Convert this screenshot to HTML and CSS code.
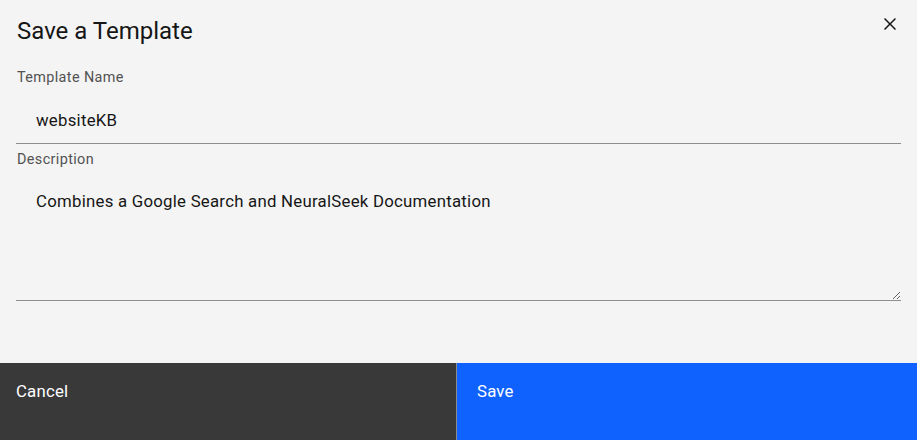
FILE: index.html
```html
<!DOCTYPE html>
<html lang="en">
<head>
<meta charset="utf-8">
<title>Save a Template</title>
<link rel="stylesheet" href="styles.css">
</head>
<body>
<div class="modal">
  <header class="modal-header">
    <h2 class="modal-title">Save a Template</h2>
    <button class="modal-close" aria-label="Close">
      <svg width="24" height="24" viewBox="0 0 32 32" fill="currentColor"><path d="M24 9.4L22.6 8 16 14.6 9.4 8 8 9.4 14.6 16 8 22.6 9.4 24 16 17.4 22.6 24 24 22.6 17.4 16 24 9.4z"/></svg>
    </button>
  </header>
  <div class="modal-body">
    <div class="field field-name">
      <label class="field-label" for="tname">Template Name</label>
      <input class="text-input" id="tname" type="text" value="websiteKB">
    </div>
    <div class="field field-desc">
      <label class="field-label" for="tdesc">Description</label>
      <textarea class="text-area" id="tdesc">Combines a Google Search and NeuralSeek Documentation</textarea>
    </div>
  </div>
  <footer class="modal-footer">
    <button class="btn btn-secondary">Cancel</button>
    <button class="btn btn-primary">Save</button>
  </footer>
</div>
</body>
</html>
```
FILE: styles.css
```css
html, body {
  margin: 0;
  padding: 0;
  background: #f4f4f4;
}
body {
  font-family: Roboto, "Liberation Sans", sans-serif;
  color: #161616;
}
.modal {
  position: relative;
  width: 917px;
  height: 440px;
  display: flex;
  flex-direction: column;
  background: #f4f4f4;
}
.modal-header {
  padding: 16px 16px 0 17px;
}
.modal-title {
  margin: 0;
  font-size: 24px;
  line-height: 30px;
  font-weight: 400;
  color: #161616;
}
.modal-close {
  position: absolute;
  top: 12px;
  right: 15px;
  width: 24px;
  height: 24px;
  padding: 0;
  border: 0;
  background: transparent;
  color: #161616;
  display: flex;
}
.modal-body {
  flex: 1;
  padding: 22px 16px 0 16px;
  display: flex;
  flex-direction: column;
}
.field {
  display: flex;
  flex-direction: column;
}
.field-desc {
  margin-top: 6px;
}
.field-label {
  font-size: 14.4px;
  line-height: 19px;
  letter-spacing: 0.38px;
  color: #525252;
  padding-left: 1px;
  margin-bottom: 9px;
}
.field-desc .field-label {
  margin-bottom: 8px;
}
.text-input,
.text-area {
  box-sizing: border-box;
  width: 100%;
  font-family: inherit;
  font-size: 16.8px;
  letter-spacing: 0.25px;
  color: #161616;
  background: #f4f4f4;
  border: 0;
  border-bottom: 1px solid #8d8d8d;
  outline: none;
  margin: 0;
  padding: 0 20px;
}
.text-input {
  height: 48px;
}
.text-area {
  height: 124px;
  line-height: 21.6px;
  padding: 14px 20px 12px 20px;
  resize: vertical;
}
.modal-footer {
  display: flex;
  height: 77px;
}
.btn {
  border: 0;
  margin: 0;
  font-family: inherit;
  font-size: 16.8px;
  line-height: 21.6px;
  letter-spacing: 0.2px;
  color: #ffffff;
  text-align: left;
  display: flex;
  align-items: flex-start;
  padding: 18px 16px 0 16px;
}
.btn-secondary {
  flex: 0 0 457px;
  box-sizing: border-box;
  background: #393939;
  border-right: 1px solid #8d8d8d;
}
.btn-primary {
  flex: 1;
  background: #0f62fe;
  padding-left: 20px;
}
```
